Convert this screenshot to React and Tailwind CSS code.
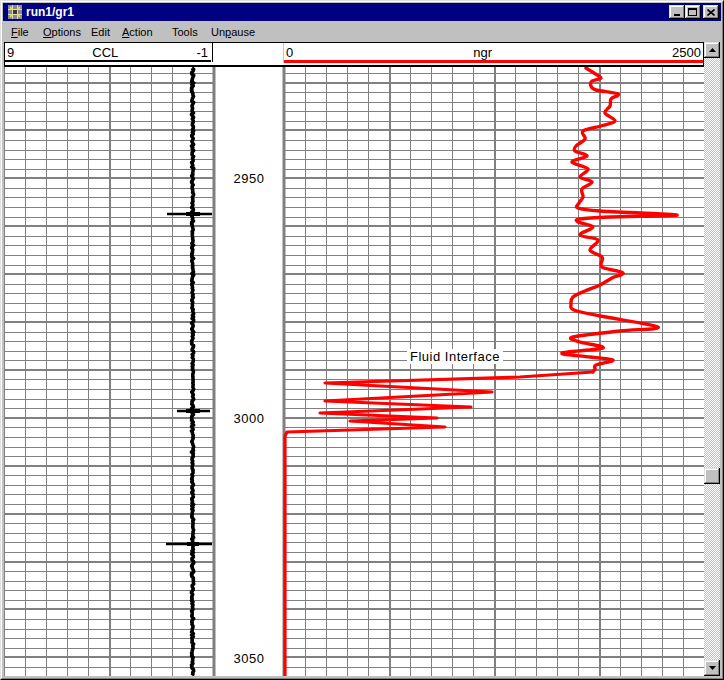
import React from 'react';

// gamma ray trace above the fluid interface, page coordinates (smoothed)
const NGR_TOP = [
  [586, 68], [594, 73], [601, 78], [592, 81], [591, 86], [596, 90], [618, 94], [611, 99], [610, 106],
  [605, 113], [615, 121], [601, 126], [583, 131], [585, 139], [576, 146], [575, 151], [587, 156], [572, 162],
  [588, 169], [580, 177], [592, 182], [582, 189], [583, 197], [579, 203], [578, 208], [600, 211], [677, 215],
  [610, 217], [580, 219], [578, 222], [593, 227], [580, 235], [598, 240], [590, 250], [602, 257], [601, 264],
  [604, 268], [623, 273], [612, 278], [600, 285], [585, 291], [573, 297], [571, 304], [574, 310], [600, 316],
  [658, 327], [620, 331], [573, 337], [580, 342], [603, 348], [562, 353], [590, 357], [613, 360], [596, 365],
  [595, 369], [593, 372],
];

// zigzag below it, drawn with straight segments
const NGR_LOW = [
  [593, 372], [520, 377], [325, 383], [492, 392], [325, 401], [471, 407], [320, 413], [437, 418], [350, 421],
  [445, 427], [287, 432], [285, 436], [285, 676],
];

const smooth = (p) => {
  let d = `M${p[0][0]},${p[0][1]}`;
  for (let i = 0; i < p.length - 1; i++) {
    const p0 = p[i - 1] || p[i];
    const p1 = p[i];
    const p2 = p[i + 1];
    const p3 = p[i + 2] || p2;
    const c1x = p1[0] + (p2[0] - p0[0]) / 6;
    const c1y = p1[1] + (p2[1] - p0[1]) / 6;
    const c2x = p2[0] - (p3[0] - p1[0]) / 6;
    const c2y = p2[1] - (p3[1] - p1[1]) / 6;
    d += ` C${c1x.toFixed(1)},${c1y.toFixed(1)} ${c2x.toFixed(1)},${c2y.toFixed(1)} ${p2[0]},${p2[1]}`;
  }
  return d;
};

const rnd = (i) => {
  const v = Math.sin(i * 127.1 + 311.7) * 43758.5453;
  return v - Math.floor(v);
};

const CCL = [];
for (let y = 68; y <= 676; y += 1.5) CCL.push([192.6 + (rnd(y) - 0.5) * 2.2, y]);

const pts = (arr) => arr.map(([x, y]) => `${x},${y}`).join(' ');

const GRID = '#808080';

const LogPlot = () => {
  const rows = [];
  for (let k = -2; k < 64; k++) {
    const y = Math.round(82.5 + 9.58 * k);
    if (y < 67 || y > 676) continue;
    const major = k % 5 === 0;
    const yy = major ? y : y + 0.5;
    rows.push(
      <g key={'h' + k} stroke={GRID} strokeWidth={major ? 2 : 1}>
        <line x1={4} x2={213} y1={yy} y2={yy} />
        <line x1={284} x2={704} y1={yy} y2={yy} />
      </g>
    );
  }

  const cols = [];
  for (let k = 1; k < 10; k++) {
    const major = k === 5;
    const x = major ? Math.round(4 + 21 * k + 0.7) : Math.floor(4 + 21 * k + 0.7) + 0.5;
    cols.push(<line key={'l' + k} x1={x} x2={x} y1={67} y2={676} stroke={GRID} strokeWidth={major ? 2 : 1} />);
  }
  for (let k = 1; k < 20; k++) {
    const major = k % 5 === 0;
    const x = major ? Math.round(284 + 21 * k + 0.7) : Math.floor(284 + 21 * k + 0.7) + 0.5;
    cols.push(<line key={'r' + k} x1={x} x2={x} y1={67} y2={676} stroke={GRID} strokeWidth={major ? 2 : 1} />);
  }

  return (
    <svg width="700" height="609" viewBox="4 67 700 609" className="block">
      <rect x="4" y="67" width="700" height="609" fill="#fff" />
      {rows}
      {cols}
      <line x1="4.5" x2="4.5" y1="67" y2="676" stroke={GRID} strokeWidth="1" />
      <line x1="214" x2="214" y1="67" y2="676" stroke={GRID} strokeWidth="3" />
      <line x1="284" x2="284" y1="67" y2="676" stroke={GRID} strokeWidth="3" />

      {[['2950', 178], ['3000', 418], ['3050', 658]].map(([t, y]) => (
        <text key={t} x="249" y={y} textAnchor="middle" dominantBaseline="central" fontSize="13" letterSpacing="0.5" fill="#000">
          {t}
        </text>
      ))}

      {/* CCL */}
      <polyline points={pts(CCL)} fill="none" stroke="#000" strokeWidth="3.6" strokeLinejoin="round" />
      <g stroke="#000" strokeWidth="2.5">
        <line x1="167" x2="212" y1="214" y2="214" />
        <line x1="177" x2="210" y1="411" y2="411" />
        <line x1="166" x2="212" y1="544" y2="544" />
      </g>
      <g stroke="#000" strokeWidth="4">
        <line x1="186" x2="200" y1="214" y2="214" />
        <line x1="186" x2="200" y1="411" y2="411" />
        <line x1="187" x2="199" y1="544" y2="544" />
      </g>

      <rect x="407" y="349" width="96" height="15" fill="#fff" />
      <text x="410" y="356.5" dominantBaseline="central" fontSize="13" letterSpacing="0.5" fill="#000">
        Fluid Interface
      </text>

      <path d={smooth(NGR_TOP)} fill="none" stroke="#ff0000" strokeWidth="3.4" strokeLinejoin="round" strokeLinecap="round" />
      <polyline points={pts(NGR_LOW)} fill="none" stroke="#ff0000" strokeWidth="3.2" strokeLinejoin="round" />
    </svg>
  );
};

const bevel = 'shadow-[inset_-1px_-1px_#000,inset_1px_1px_#dfdfdf,inset_-2px_-2px_#808080,inset_2px_2px_#fff]';

const CaptionButton = ({ children }) => (
  <div className={`w-[16px] h-[14px] bg-[#c0c0c0] flex items-center justify-center ${bevel}`}>{children}</div>
);

const Arrow = ({ down }) => (
  <svg width="7" height="4" viewBox="0 0 7 4">
    <polygon points={down ? '0,0 7,0 3.5,4' : '0,4 7,4 3.5,0'} fill="#000" />
  </svg>
);

const MenuItem = ({ w, children }) => (
  <div className="h-full flex items-center pt-[3px]" style={{ width: w }}>
    <span>{children}</span>
  </div>
);

export default function App() {
  return (
    <div className="w-[724px] h-[680px] font-['Liberation_Sans',Arial,sans-serif] text-black bg-[#c0c0c0] overflow-hidden">
      <div className="w-full h-full border border-t-[#dfdfdf] border-l-[#dfdfdf] border-r-black border-b-black">
        <div className="w-full h-full border border-t-white border-l-white border-r-[#808080] border-b-[#808080] p-px flex flex-col">
          {/* title bar */}
          <div className="h-[18px] bg-[#000080] flex items-center pl-[5px] pr-[2px]">
            <svg width="14" height="14" viewBox="0 0 14 14" className="mr-[4px]">
              <rect x="0" y="0" width="14" height="14" fill="#8a8a8a" />
              <path d="M0 4.5H14M0 9.5H14M4.5 0V14M9.5 0V14" stroke="#d8d8d8" strokeWidth="1" />
              <path d="M2 2L12 12M12 2L2 12" stroke="#f0e040" strokeWidth="1.6" />
              <rect x="5" y="5" width="4" height="4" fill="#3a3a3a" />
            </svg>
            <span className="text-white font-bold text-[12px] leading-none">run1/gr1</span>
            <div className="ml-auto flex items-center">
              <CaptionButton>
                <div className="w-[6px] h-[2px] bg-black mt-[6px] -ml-[1px]" />
              </CaptionButton>
              <CaptionButton>
                <div className="w-[9px] h-[8px] border border-black border-t-2 -ml-[1px]" />
              </CaptionButton>
              <div className="w-[2px]" />
              <CaptionButton>
                <svg width="8" height="7" viewBox="0 0 8 7" className="-ml-[1px]">
                  <path d="M0.5 0.5L7.5 6.5M7.5 0.5L0.5 6.5" stroke="#000" strokeWidth="1.6" />
                </svg>
              </CaptionButton>
            </div>
          </div>

          {/* menu */}
          <div className="h-[19px] flex items-center pl-[8px] text-[11px]">
            <MenuItem w={32}><u>F</u>ile</MenuItem>
            <MenuItem w={48}><u>O</u>ptions</MenuItem>
            <MenuItem w={31}>Edit</MenuItem>
            <MenuItem w={50}><u>A</u>ction</MenuItem>
            <MenuItem w={39}>Tools</MenuItem>
            <MenuItem w={60}>Un<u>p</u>ause</MenuItem>
          </div>

          <div className="h-[2px]" />

          {/* client */}
          <div className="mx-px h-[634px] flex">
            <div className="w-[700px] flex flex-col">
              <div className="h-[25px] bg-white border-t border-l border-r border-black border-b-2 flex text-[13px] leading-[15px]">
                <div className="w-[208px] h-[19px] border-r border-black flex flex-col">
                  <div className="flex justify-between pl-[2px] pr-[4px] pt-[2px]">
                    <span>9</span>
                    <span>CCL</span>
                    <span>-1</span>
                  </div>
                  <div className="mt-auto h-[2px] bg-black mr-[1px]" />
                </div>
                <div className="w-[70px]" />
                <div className="flex-1 h-[20px] border-l border-[#c8c8c8] flex flex-col">
                  <div className="flex justify-between pl-[2px] pr-[2px] pt-[2px]">
                    <span>0</span>
                    <span>ngr</span>
                    <span>2500</span>
                  </div>
                  <div className="mt-auto h-[3px] bg-[#ff0000]" />
                </div>
              </div>
              <LogPlot />
            </div>

            {/* scrollbar */}
            <div className="w-[16px] flex flex-col">
              <div className={`h-[16px] bg-[#c0c0c0] flex items-center justify-center ${bevel}`}>
                <Arrow />
              </div>
              <div className="flex-1 flex flex-col bg-[repeating-conic-gradient(#c0c0c0_0_25%,#ffffff_0_50%)] bg-[length:2px_2px]">
                <div className="h-[410px]" />
                <div className={`h-[16px] bg-[#c0c0c0] ${bevel}`} />
              </div>
              <div className={`h-[16px] bg-[#c0c0c0] flex items-center justify-center ${bevel}`}>
                <Arrow down />
              </div>
            </div>
          </div>
        </div>
      </div>
    </div>
  );
}
